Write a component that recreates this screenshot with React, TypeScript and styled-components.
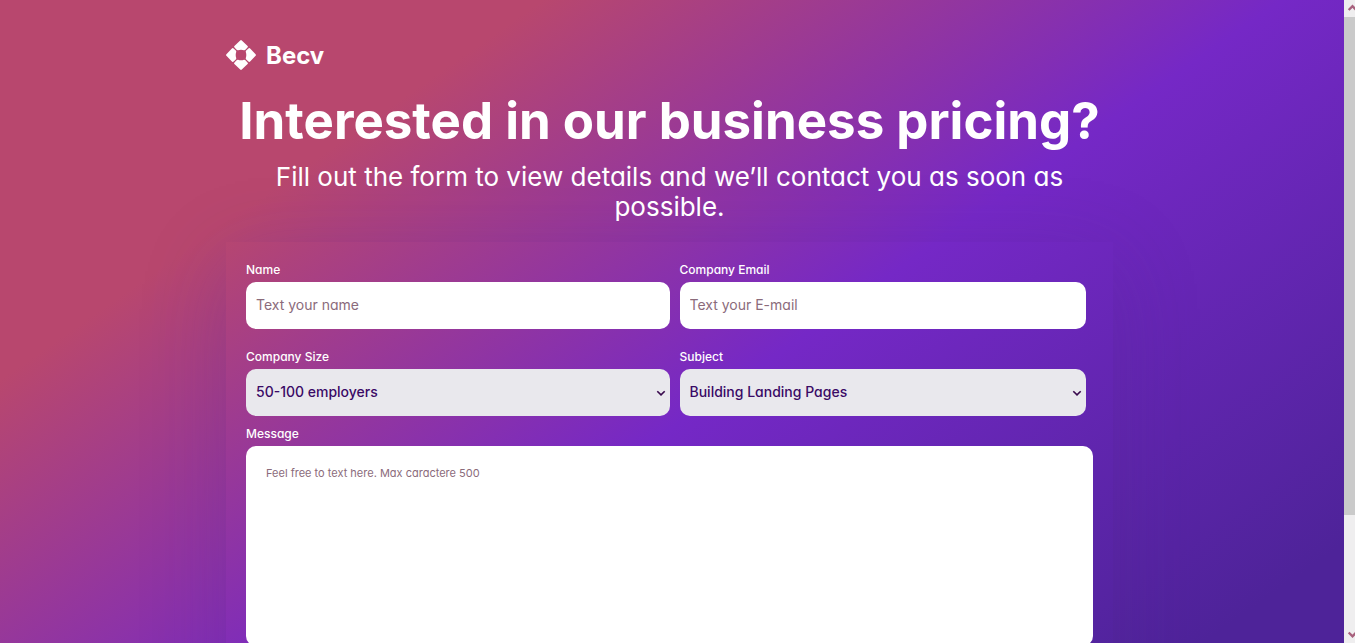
import React from "react";
import styled, { createGlobalStyle } from "styled-components";

const GlobalStyle = createGlobalStyle`
  *, *::before, *::after { box-sizing: border-box; }
  body {
    margin: 0;
    font-family: Inter, "Liberation Sans", sans-serif;
    font-feature-settings: "cv11";
    color: #fff;
  }
`;

const Window = styled.div`
  display: grid;
  grid-template-columns: minmax(0, 1fr) 11px;
  height: 100vh;
`;

const Scroller = styled.div`
  overflow-y: auto;
  scrollbar-width: none;
`;

const Page = styled.main`
  display: flex;
  flex-direction: column;
  align-items: center;
  padding: 40px 5px 50px 0;
  overflow: hidden;
  background: linear-gradient(145deg, #b8476e 22%, #7528c6 52%, #4e2399 86%);
`;

const Content = styled.div`
  width: 66%;
  min-width: min(887px, 100%);
`;

const Brand = styled.a`
  display: inline-flex;
  align-items: center;
  gap: 10px;
  height: 30px;
  color: #fff;
  font-size: 24px;
  font-weight: 700;
  text-decoration: none;
`;

const Title = styled.h1`
  margin: 12px 0 0;
  font-size: 51px;
  font-weight: 700;
  line-height: 70px;
  text-align: center;
`;

const Lead = styled.p`
  margin: 6px 0 20px;
  padding: 0 40px;
  font-size: 26px;
  line-height: 30px;
  text-align: center;
`;

const Panel = styled.form`
  padding: 20px 20px 90px;
  box-shadow: 0 20px 80px rgba(80, 40, 130, 0.22);
`;

const Row = styled.div<{ $gap: number }>`
  display: grid;
  grid-template-columns: 50% 48%;
  column-gap: 10px;
  margin-bottom: ${(p) => p.$gap}px;
`;

const Field = styled.div`
  display: flex;
  flex-direction: column;
`;

const Label = styled.label`
  margin-bottom: 4px;
  font-size: 12px;
  font-weight: 500;
  line-height: 16px;
`;

const Input = styled.input`
  width: 100%;
  height: 47px;
  padding: 0 10px 2px;
  border: 0;
  border-radius: 10px;
  background: #fff;
  color: #3a0a66;
  font: 400 14px Inter, sans-serif;
  font-feature-settings: inherit;
  &::placeholder { color: #8b6b7b; }
`;

const SelectBox = styled.div`
  display: grid;
  align-items: center;
  > * { grid-area: 1 / 1; }
  > svg { justify-self: end; margin-right: 4px; pointer-events: none; }
`;

const Select = styled.select`
  appearance: none;
  width: 100%;
  height: 47px;
  padding: 0 10px 2px;
  border: 0;
  border-radius: 10px;
  background: #e9e8ed;
  color: #3a0a66;
  font: 500 14px Inter, sans-serif;
  font-feature-settings: inherit;
`;

const TextArea = styled.textarea`
  display: block;
  width: 100%;
  height: 200px;
  padding: 20px;
  border: 0;
  border-radius: 10px;
  background: #fff;
  color: #3a0a66;
  font: 400 11px/14px Inter, sans-serif;
  font-feature-settings: inherit;
  resize: none;
  &::placeholder { color: #8b6b7b; }
`;

const Track = styled.div`
  display: grid;
  grid-template-rows: 17px 9fr 2fr 17px;
  background: #efeeef;
  overflow: hidden;
`;

const Thumb = styled.div`
  background: #cacaca;
`;

const ArrowSlot = styled.div<{ $last?: boolean }>`
  grid-row: ${(p) => (p.$last ? 4 : 1)};
  svg { display: block; }
`;

const Logo = () => (
  <svg width="30" height="30" viewBox="-15 -15 30 30" fill="#fff" aria-hidden="true">
    {[0, 90, 180, 270].map((turn) => (
      <path
        key={turn}
        transform={`rotate(${turn})`}
        d="M-.8-14.6Q0-15.3 .8-14.6L6.6-9.1Q7.2-8.4 6.7-7.7L4.4-5.2Q3.8-4.6 3-4.8Q0-5.8-3-4.8Q-3.8-4.6-4.4-5.2L-6.7-7.7Q-7.2-8.4-6.6-9.1Z"
      />
    ))}
  </svg>
);

const Chevron = () => (
  <svg width="10" height="8" viewBox="0 0 10 8" fill="none" stroke="#3a0a4e" strokeWidth="1.6" aria-hidden="true">
    <path d="M1.3 2.2 5 5.9 8.7 2.2" />
  </svg>
);

const ScrollArrow = ({ down }: { down?: boolean }) => (
  <svg width="17" height="17" viewBox="0 0 17 17" fill="none" stroke="#a8617d" strokeWidth="2.4" aria-hidden="true">
    <path d={down ? "M4.7 6.5 8.5 10.3 12.3 6.5" : "M4.7 10 8.5 6.2 12.3 10"} />
  </svg>
);

export default function App() {
  return (
    <>
      <GlobalStyle />
      <Window>
        <Scroller>
          <Page>
            <Content>
              <Brand href="#">
                <Logo />
                Becv
              </Brand>
              <Title>Interested in our business pricing?</Title>
              <Lead>Fill out the form to view details and we’ll contact you as soon as possible.</Lead>
              <Panel>
                <Row $gap={20}>
                  <Field>
                    <Label htmlFor="name">Name</Label>
                    <Input id="name" type="text" placeholder="Text your name" />
                  </Field>
                  <Field>
                    <Label htmlFor="email">Company Email</Label>
                    <Input id="email" type="email" placeholder="Text your E-mail" />
                  </Field>
                </Row>
                <Row $gap={10}>
                  <Field>
                    <Label htmlFor="size">Company Size</Label>
                    <SelectBox>
                      <Select id="size">
                        <option>50-100 employers</option>
                      </Select>
                      <Chevron />
                    </SelectBox>
                  </Field>
                  <Field>
                    <Label htmlFor="subject">Subject</Label>
                    <SelectBox>
                      <Select id="subject">
                        <option>Building Landing Pages</option>
                      </Select>
                      <Chevron />
                    </SelectBox>
                  </Field>
                </Row>
                <Field>
                  <Label htmlFor="message">Message</Label>
                  <TextArea id="message" maxLength={500} placeholder="Feel free to text here. Max caractere 500" />
                </Field>
              </Panel>
            </Content>
          </Page>
        </Scroller>
        <Track aria-hidden="true">
          <ArrowSlot><ScrollArrow /></ArrowSlot>
          <Thumb />
          <ArrowSlot $last><ScrollArrow down /></ArrowSlot>
        </Track>
      </Window>
    </>
  );
}
